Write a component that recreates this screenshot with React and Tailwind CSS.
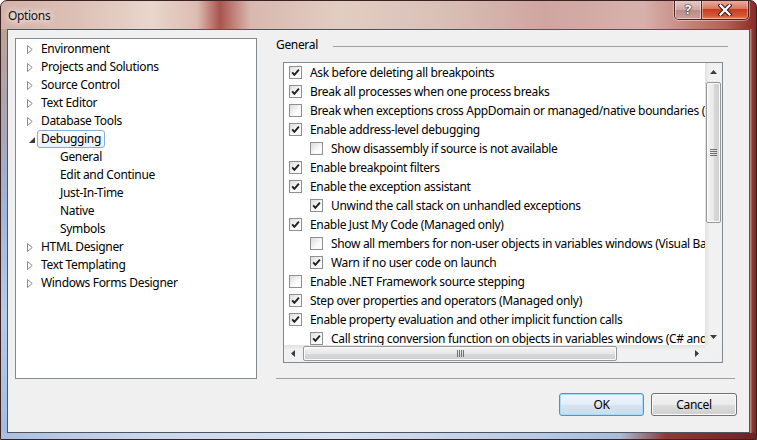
import React from 'react';

const TREE = [
  ['Environment', 'closed'],
  ['Projects and Solutions', 'closed'],
  ['Source Control', 'closed'],
  ['Text Editor', 'closed'],
  ['Database Tools', 'closed'],
  ['Debugging', 'open'],
  ['General', 'child'],
  ['Edit and Continue', 'child'],
  ['Just-In-Time', 'child'],
  ['Native', 'child'],
  ['Symbols', 'child'],
  ['HTML Designer', 'closed'],
  ['Text Templating', 'closed'],
  ['Windows Forms Designer', 'closed'],
];

const OPTIONS = [
  [0, true, 'Ask before deleting all breakpoints'],
  [0, true, 'Break all processes when one process breaks'],
  [0, false, 'Break when exceptions cross AppDomain or managed/native boundaries (Managed only)'],
  [0, true, 'Enable address-level debugging'],
  [1, false, 'Show disassembly if source is not available'],
  [0, true, 'Enable breakpoint filters'],
  [0, true, 'Enable the exception assistant'],
  [1, true, 'Unwind the call stack on unhandled exceptions'],
  [0, true, 'Enable Just My Code (Managed only)'],
  [1, false, 'Show all members for non-user objects in variables windows (Visual Basic only)'],
  [1, true, 'Warn if no user code on launch'],
  [0, false, 'Enable .NET Framework source stepping'],
  [0, true, 'Step over properties and operators (Managed only)'],
  [0, true, 'Enable property evaluation and other implicit function calls'],
  [1, true, 'Call string conversion function on objects in variables windows (C# and JavaScript only)'],
];

function Check({ on }) {
  return (
    <span className="w-[13px] h-[13px] shrink-0 border border-[#8e8f8f] bg-[linear-gradient(135deg,#dcdcdc,#fcfcfc_65%)] flex items-center justify-center">
      {on && (
        <svg width="9" height="9" viewBox="0 0 9 9">
          <path d="M1.2 4.3 L3.4 6.8 L7.9 1.6" fill="none" stroke="#1e1e1e" strokeWidth="1.9" />
        </svg>
      )}
    </span>
  );
}

function TreeRow({ label, kind }) {
  if (kind === 'child') {
    return (
      <div className="h-[18px] flex items-center pl-[40px]">
        <span className="px-[3px] border border-transparent leading-[16px]">{label}</span>
      </div>
    );
  }
  const open = kind === 'open';
  return (
    <div className="h-[18px] flex items-center">
      <span className="w-[21px] shrink-0 flex items-center pl-[11px]">
        {open ? (
          <svg width="7" height="9" viewBox="0 0 7 9" className="ml-[2px] mt-[3px]">
            <path d="M6 1 L6 7 L0 7 Z" fill="#3b3b3b" />
          </svg>
        ) : (
          <svg width="6" height="9" viewBox="0 0 6 9">
            <path d="M0.5 0.5 L5.2 4.5 L0.5 8.5 Z" fill="#fff" stroke="#8c8c8c" />
          </svg>
        )}
      </span>
      <span
        className={
          open
            ? 'px-[3px] h-[18px] flex items-center border border-[#84acdd] rounded-[3px] bg-[linear-gradient(#fbfdff,#e8f2fd)]'
            : 'px-[3px] border border-transparent leading-[16px]'
        }
      >
        {label}
      </span>
    </div>
  );
}

function Tri({ dir }) {
  const d = {
    up: 'M0 4 L3.5 0 L7 4 Z',
    down: 'M0 0 L3.5 4 L7 0 Z',
    left: 'M4 0 L0 3.5 L4 7 Z',
    right: 'M0 0 L4 3.5 L0 7 Z',
  }[dir];
  const v = dir === 'up' || dir === 'down';
  return (
    <svg width={v ? 7 : 4} height={v ? 4 : 7} viewBox={v ? '0 0 7 4' : '0 0 4 7'}>
      <path d={d} fill="#3c3c3c" />
    </svg>
  );
}

export default function App() {
  return (
    <div className="w-[757px] h-[440px] font-['Noto_Sans','DejaVu_Sans',sans-serif] text-[12px] tracking-[-0.33px] text-black flex flex-col rounded-t-[7px] border border-[#3a2222] overflow-hidden bg-[linear-gradient(90deg,#d3b2a8_0%,#dcc0b6_10%,#e8d6cc_20%,#dcbcb2_26%,#a9544f_29%,#d7b8ae_33%,#e2cdc3_45%,#d9c1b8_58%,#cfa5a0_72%,#d7b2ac_85%,#b26058_96%,#8a2a26_100%)]">
      {/* title bar */}
      <div className="h-[28px] flex justify-between shrink-0">
        <span className="self-center pl-[7px] pt-[1px] text-[12px] text-[#111] [text-shadow:0_0_6px_#ffffff,0_0_10px_#ffffff]">Options</span>
        <div className="flex self-start mr-[7px] -mt-px h-[20px] border border-[#4a2020] border-t-0 rounded-b-[5px] overflow-hidden shadow-[0_0_0_1px_rgba(255,255,255,0.4)]">
          <div className="w-[27px] flex items-center justify-center border-r border-[#5a2a2a] bg-[linear-gradient(#e6cfcb,#cfa8a4_50%,#b98a86_52%,#caa09c)] shadow-[inset_0_0_0_1px_rgba(255,255,255,0.45)]">
            <span className="text-white font-bold text-[13px] leading-none [text-shadow:0_0_1px_#222,0_0_1px_#222,0_0_2px_#333]">?</span>
          </div>
          <div className="w-[46px] flex items-center justify-center bg-[linear-gradient(#eab4a6,#d9785f_45%,#c63c20_50%,#d65a36_85%,#e88a6a)] shadow-[inset_0_0_0_1px_rgba(255,255,255,0.35)]">
            <svg width="14" height="12" viewBox="0 0 14 12">
              <path d="M2.5 1.5 L11.5 10.5 M11.5 1.5 L2.5 10.5" stroke="#3a1a1a" strokeWidth="4.2" strokeLinecap="square" />
              <path d="M2.5 1.5 L11.5 10.5 M11.5 1.5 L2.5 10.5" stroke="#ffffff" strokeWidth="2.2" strokeLinecap="square" />
            </svg>
          </div>
        </div>
      </div>

      <div className="flex flex-1 min-h-0">
        <div className="w-[6px] shrink-0 bg-[linear-gradient(#b9a397,#a7a6b8_25%,#9fb6dc_45%,#b6cbea_70%,#a2bce2)]" />

        {/* client area */}
        <div className="flex-1 border border-[#4d5560] bg-[#f0f0f0] flex">
          <div className="pl-[7px] pt-[8px]">
            <div className="w-[242px] h-[341px] border border-[#828790] bg-white pt-px">
              {TREE.map(([l, k]) => (
                <TreeRow key={l} label={l} kind={k} />
              ))}
            </div>
          </div>

          <div className="ml-[19px] w-[461px] pt-[7px] flex flex-col">
            <div className="h-[16px] flex items-center gap-[15px] mr-[9px]">
              <span>General</span>
              <div className="flex-1 h-px bg-[#a0a0a0] mt-[2px]" />
            </div>

            <div className="mt-[9px] ml-[7px] w-[440px] h-[301px] border border-[#828790] bg-white grid grid-cols-[1fr_17px] grid-rows-[1fr_17px]">
              <div className="overflow-hidden">
                {OPTIONS.map(([lvl, on, t]) => (
                  <div key={t} className={`h-[19px] flex items-center gap-[8px] whitespace-nowrap ${lvl ? 'pl-[26px]' : 'pl-[5px]'}`}>
                    <Check on={on} />
                    <span>{t}</span>
                  </div>
                ))}
              </div>

              {/* vertical scrollbar */}
              <div className="flex flex-col bg-[linear-gradient(90deg,#e2e2e2,#f1f1f1_30%,#f1f1f1)]">
                <div className="h-[17px] flex items-center justify-center">
                  <Tri dir="up" />
                </div>
                <div className="flex-1 px-[1px]">
                  <div className="mt-[2px] h-[141px] rounded-[2px] border border-[#979797] bg-[linear-gradient(90deg,#f4f4f4,#e8e8e8_50%,#d9d9d9_52%,#cfcfcf)] shadow-[inset_0_0_0_1px_#fbfbfb] flex flex-col items-center justify-center gap-[1px]">
                    <div className="w-[7px] h-px bg-[#6e6e6e]" />
                    <div className="w-[7px] h-px bg-[#6e6e6e]" />
                    <div className="w-[7px] h-px bg-[#6e6e6e]" />
                    <div className="w-[7px] h-px bg-[#6e6e6e]" />
                  </div>
                </div>
                <div className="h-[17px] flex items-center justify-center">
                  <Tri dir="down" />
                </div>
              </div>

              {/* horizontal scrollbar */}
              <div className="flex bg-[linear-gradient(#e2e2e2,#f1f1f1_30%,#f1f1f1)]">
                <div className="w-[17px] flex items-center justify-center">
                  <Tri dir="left" />
                </div>
                <div className="flex-1 py-[1px]">
                  <div className="ml-[2px] w-[314px] h-full rounded-[2px] border border-[#979797] bg-[linear-gradient(#f4f4f4,#e8e8e8_50%,#d9d9d9_52%,#cfcfcf)] shadow-[inset_0_0_0_1px_#fbfbfb] flex items-center justify-center gap-[1px]">
                    <div className="w-px h-[7px] bg-[#6e6e6e]" />
                    <div className="w-px h-[7px] bg-[#6e6e6e]" />
                    <div className="w-px h-[7px] bg-[#6e6e6e]" />
                    <div className="w-px h-[7px] bg-[#6e6e6e]" />
                  </div>
                </div>
                <div className="w-[17px] flex items-center justify-center">
                  <Tri dir="right" />
                </div>
              </div>
              <div className="bg-[#f0f0f0]" />
            </div>

            <div className="mt-[15px] w-[459px] h-px bg-[#a0a0a0]" />

            <div className="mt-[14px] flex justify-end gap-[7px]">
              <button className="w-[85px] h-[23px] rounded-[3px] border border-[#3c9ad6] bg-[linear-gradient(#f1f7fb,#e3edf5_50%,#d4e3ee_52%,#cddde9)] shadow-[inset_0_0_0_1px_#a9dcf6]">
                OK
              </button>
              <button className="w-[86px] h-[23px] rounded-[3px] border border-[#707070] bg-[linear-gradient(#f2f2f2,#ebebeb_50%,#dddddd_52%,#cfcfcf)] shadow-[inset_0_0_0_1px_#fcfcfc]">
                Cancel
              </button>
            </div>
          </div>
        </div>

        <div className="w-[6px] shrink-0 bg-[linear-gradient(90deg,#c79890,#8a3a36_40%,#7a2a28)]" />
      </div>

      <div className="h-[6px] shrink-0 bg-[linear-gradient(90deg,#a9bfe0,#c9d9ef_20%,#d6e2f1_45%,#b4c9e6_72%,#a7bcd8_82%,#8c3c38_88%,#6e2222)]" />
    </div>
  );
}
